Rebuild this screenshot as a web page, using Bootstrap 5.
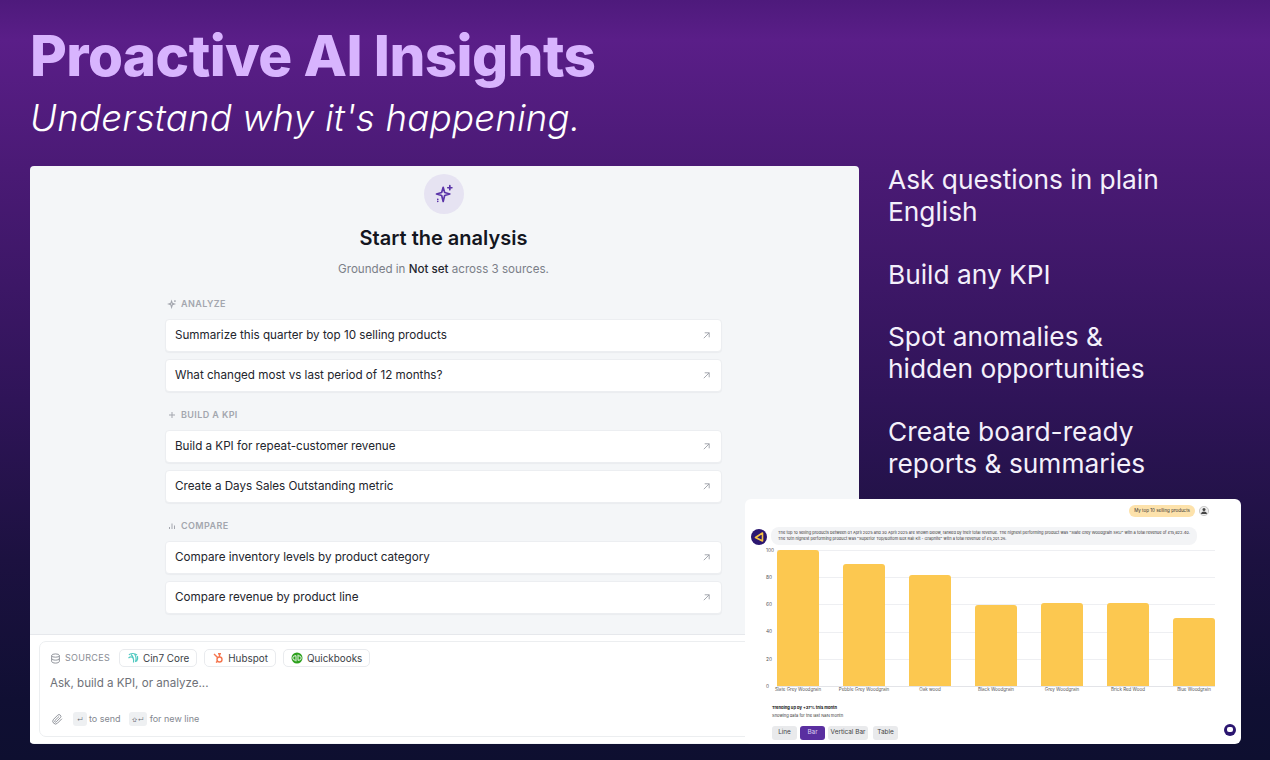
<!DOCTYPE html>
<html lang="en">
<head>
  <meta charset="UTF-8">
  <meta name="viewport" content="width=device-width, initial-scale=1.0">
  <title>Proactive AI Insights</title>
  <link href="https://cdn.jsdelivr.net/npm/bootstrap@5.3.0/dist/css/bootstrap.min.css" rel="stylesheet">
  <style>
    html, body { height: 100%; }
    body {
      font-family: Inter, "Liberation Sans", sans-serif;
      overflow: hidden;
      background: linear-gradient(180deg, #4e1a7c 0, #5a1e88 40px, #4a1a75 170px, #2f1458 400px, #1c1140 560px, #100f33 700px, #0e0f30 760px);
      padding: 18px 30px 0;
    }
    .hero-title { font-size: 56.6px; line-height: 76px; font-weight: 800; color: #d8b4fe; letter-spacing: -0.6px; margin: 0; }
    .hero-sub { font-size: 36.6px; line-height: 46px; font-style: italic; color: #fff; margin: 1px 0 25px; letter-spacing: .25px; font-weight: 300; }
    .stage { position: relative; height: 578px; }
    .main-panel { width: 829px; height: 578px; background: #f4f6f8; border-radius: 4px; overflow: hidden; }
    .side-list { padding: 0 0 0 29px; width: 320px; color: #f4f0fb; font-size: 26.3px; line-height: 32px; margin-top: -2px; }
    .side-list p { margin: 0 0 30.500px; }
    .spark-circle { width: 40px; height: 40px; border-radius: 50%; background: #e6e3f2; margin: 8px auto 0; position: relative; left: -1px; }
    .start-title { font-size: 20px; line-height: 28px; font-weight: 600; color: #14161f; margin: 10px 2px 0 0; text-align: center; }
    .start-sub { font-size: 11.6px; line-height: 16px; color: #7b7f88; text-align: center; margin: 9px 2px 0 0; }
    .start-sub b { font-weight: 500; color: #24262e; }
    .prompts { width: 557px; margin: 21px 0 0 135px; }
    .group-label { font-size: 9px; line-height: 12px; font-weight: 600; letter-spacing: .4px; color: #a3a6ae; padding-left: 2px; margin-bottom: 9px; }
    .group-label.later { margin-top: 17px; }
    .prompt-row { height: 33px; background: #fff; border: 1px solid #eceef1; border-radius: 4px; padding: 0 9px; margin-bottom: 7px; font-size: 11.65px; color: #23252d; box-shadow: 0 1px 1px rgba(20,20,40,.04); }
    .prompt-row svg { flex: none; margin-right: 1px; }
    .composer-wrap { height: 109px; margin-top: 20px; background: #fff; border-top: 1px solid #e6e8ec; padding: 6px 9px 0; }
    .composer { height: 96px; border: 1px solid #eceef0; border-radius: 7px; padding: 7px 10px; }
    .source-row { gap: 7px; }
    .sources-label { font-size: 9px; letter-spacing: .3px; color: #8a8d95; margin-right: 2px; }
    .src-chip { height: 18px; padding: 0 7px; border: 1px solid #e9ebee; border-radius: 5px; font-size: 9.9px; color: #3c3f47; background: #fff; }
    .ask-line { font-size: 11.6px; line-height: 16px; color: #6e7178; margin: 8px 0 0; }
    .hint-row { margin-top: 21px; font-size: 9px; color: #84878f; gap: 2px; }
    .clip-icon { margin: 0 8px 0 2px; }
    .key-cap { display: inline-flex; align-items: center; justify-content: center; height: 14px; min-width: 14px; padding: 0 2px; border-radius: 3px; background: #eef0f2; color: #6c6f76; font-size: 6px; }
    .key-wide { min-width: 18px; margin-left: 6px; margin-right: 1px; }
    .chart-card { position: absolute; left: 715px; top: 333px; width: 496px; height: 245px; background: #fff; border-radius: 6px; padding: 6px 6px 0; }
    .user-bubble { height: 12px; padding: 0 5px; background: #fde2ab; border-radius: 6px; font-size: 4.5px; color: #333; }
    .ai-bubble { margin-left: 4px; width: 426px; height: 18px; padding: 3px 7px 0; background: #f3f4f6; border-radius: 8px; font-size: 4px; line-height: 6px; color: #333; white-space: nowrap; }
    .ai-logo { width: 16px; height: 16px; border-radius: 50%; background: #2b1670; flex: none; margin-top: 2px; }
    .chart-area { position: relative; height: 137px; margin: 5px 20px 0 26px; border-bottom: 1px solid #e3e4e8;
      background: repeating-linear-gradient(180deg, #eeeff2 0, #eeeff2 1px, transparent 1px, transparent 27.2px); }
    .y-ticks { position: absolute; left: -11px; top: -3px; height: 143px; font-size: 4.8px; color: #555; }
    .bars { position: absolute; inset: 0; }
    .bar-slot { width: 42px; height: 100%; }
    .chart-bar { background: #fcc850; border-radius: 3px 3px 0 0; }
    .x-labels { margin: 0 20px 0 26px; font-size: 4.5px; color: #555; }
    .x-labels span { width: 42px; white-space: nowrap; display: flex; justify-content: center; }
    .trend-title { font-size: 4.1px; line-height: 6px; font-weight: 700; color: #111; margin: 11px 0 0 21px; }
    .trend-sub { font-size: 4.1px; line-height: 6px; color: #333; margin: 2px 0 0 21px; }
    .chart-tabs { margin: 7px 0 0 21px; gap: 3px; }
    .chart-tab { height: 14px; border-radius: 3px; background: #e9eaec; color: #444; font-size: 6.4px; }
    .chart-tab.on { background: #5a2fa0; color: #ddd2f3; }
    .tab-sm { width: 25px; }
    .tab-lg { width: 40px; }
    .tab-last { margin-left: 2px; }
    .chat-dot { position: absolute; right: 5px; bottom: 8px; width: 12px; height: 12px; border-radius: 50%; background: #2b1670; }
    .chat-dot::after { content: ""; position: absolute; left: 3px; top: 3px; width: 6px; height: 5px; background: #fff; border-radius: 2px; }
  </style>
</head>
<body>
  <h1 class="hero-title">Proactive AI Insights</h1>
  <p class="hero-sub">Understand why it's happening.</p>

  <div class="stage d-flex">
    <div class="main-panel">
      <div class="spark-circle d-flex align-items-center justify-content-center">
        <svg width="20" height="20" viewBox="0 0 24 24" fill="none" stroke="#5b34a8" stroke-width="2" stroke-linecap="round" stroke-linejoin="round">
          <path d="M11 4l1.800 6.200L19 12l-6.200 1.800L11 21l-1.800-7.200L3 12l6.200-1.800z"/>
          <path d="M19 2v5M16.500 4.500h5M4.500 18.500h.01M4.500 21h.01"/>
        </svg>
      </div>
      <h2 class="start-title">Start the analysis</h2>
      <p class="start-sub">Grounded in <b>Not set</b> across 3 sources.</p>

      <div class="prompts">
        <div class="group-label d-flex align-items-center gap-1">
          <svg width="10" height="10" viewBox="0 0 24 24" fill="none" stroke="#a3a6ae" stroke-width="2.500"><path d="M11 5l1.800 5.200L18 12l-5.200 1.800L11 20l-1.800-6.200L4 12l5.200-1.800zM19 3v4M17 5h4"/></svg>
          ANALYZE
        </div>
        <div class="prompt-row d-flex align-items-center justify-content-between">Summarize this quarter by top 10 selling products
          <svg width="9" height="9" viewBox="0 0 10 10" fill="none" stroke="#9b9ea6" stroke-width="1"><path d="M2 8L8 2M3 2h5v5"/></svg></div>
        <div class="prompt-row d-flex align-items-center justify-content-between">What changed most vs last period of 12 months?
          <svg width="9" height="9" viewBox="0 0 10 10" fill="none" stroke="#9b9ea6" stroke-width="1"><path d="M2 8L8 2M3 2h5v5"/></svg></div>

        <div class="group-label later d-flex align-items-center gap-1">
          <svg width="10" height="10" viewBox="0 0 10 10" fill="none" stroke="#a3a6ae" stroke-width="1"><path d="M5 2v6M2 5h6"/></svg>
          BUILD A KPI
        </div>
        <div class="prompt-row d-flex align-items-center justify-content-between">Build a KPI for repeat-customer revenue
          <svg width="9" height="9" viewBox="0 0 10 10" fill="none" stroke="#9b9ea6" stroke-width="1"><path d="M2 8L8 2M3 2h5v5"/></svg></div>
        <div class="prompt-row d-flex align-items-center justify-content-between">Create a Days Sales Outstanding metric
          <svg width="9" height="9" viewBox="0 0 10 10" fill="none" stroke="#9b9ea6" stroke-width="1"><path d="M2 8L8 2M3 2h5v5"/></svg></div>

        <div class="group-label later d-flex align-items-center gap-1">
          <svg width="10" height="10" viewBox="0 0 10 10" fill="none" stroke="#a3a6ae" stroke-width="1"><path d="M2.500 8V6M5 8V2.500M7.500 8V4.500"/></svg>
          COMPARE
        </div>
        <div class="prompt-row d-flex align-items-center justify-content-between">Compare inventory levels by product category
          <svg width="9" height="9" viewBox="0 0 10 10" fill="none" stroke="#9b9ea6" stroke-width="1"><path d="M2 8L8 2M3 2h5v5"/></svg></div>
        <div class="prompt-row d-flex align-items-center justify-content-between">Compare revenue by product line
          <svg width="9" height="9" viewBox="0 0 10 10" fill="none" stroke="#9b9ea6" stroke-width="1"><path d="M2 8L8 2M3 2h5v5"/></svg></div>
      </div>

      <div class="composer-wrap">
        <div class="composer">
          <div class="source-row d-flex align-items-center">
            <span class="sources-label d-flex align-items-center gap-1">
              <svg width="11" height="11" viewBox="0 0 12 12" fill="none" stroke="#8a8d95" stroke-width="1"><ellipse cx="6" cy="2.800" rx="4.200" ry="1.800"/><path d="M1.800 2.800v6.400c0 1 1.900 1.800 4.200 1.800s4.200-.8 4.200-1.800V2.800M1.800 6c0 1 1.900 1.800 4.200 1.800s4.200-.8 4.200-1.800"/></svg>
              SOURCES
            </span>
            <span class="src-chip d-flex align-items-center gap-1">
              <svg width="12" height="12" viewBox="0 0 12 12" fill="none" stroke="#4fc9c0" stroke-width="1.200"><path d="M2 3c1-2 6-2 8 0M1.500 6c2-1.500 4-1.500 5 1M4 2.500c2 2 3 5 2.500 8M7.500 2c1.500 2 2 5 1 8M10.500 4c.5 2 0 4-1 5.500"/></svg>
              Cin7 Core
            </span>
            <span class="src-chip d-flex align-items-center gap-1">
              <svg width="12" height="12" viewBox="0 0 12 12" fill="none" stroke="#f5764f" stroke-width="1.400"><circle cx="7.500" cy="7.500" r="2.500"/><path d="M7.500 5V2M2 2l3.800 3.800M4 10.500l1.700-1.400M6 1.800h3"/></svg>
              Hubspot
            </span>
            <span class="src-chip d-flex align-items-center gap-1">
              <svg width="12" height="12" viewBox="0 0 12 12"><circle cx="6" cy="6" r="5.500" fill="#2ca01c"/><path d="M5 3.800H4a2.200 2.200 0 0 0 0 4.400h.6M5 3.600v5.800M7 8.200h1a2.200 2.200 0 0 0 0-4.400h-.6M7 8.400V2.600" fill="none" stroke="#fff" stroke-width=".9"/></svg>
              Quickbooks
            </span>
          </div>
          <p class="ask-line">Ask, build a KPI, or analyze...</p>
          <div class="hint-row d-flex align-items-center">
            <svg class="clip-icon" width="11" height="11" viewBox="0 0 24 24" fill="none" stroke="#8a8d95" stroke-width="2" stroke-linecap="round"><path d="M21 11l-9 9a6 6 0 0 1-8.500-8.500l9-9a4 4 0 0 1 5.700 5.700l-9 9a2 2 0 0 1-2.900-2.900l8.500-8.300"/></svg>
            <span class="key-cap">↵</span> to send
            <span class="key-cap key-wide">⇧↵</span> for new line
          </div>
        </div>
      </div>
    </div>

    <div class="side-list">
      <p>Ask questions in plain English</p>
      <p>Build any KPI</p>
      <p>Spot anomalies &amp; hidden opportunities</p>
      <p>Create board-ready reports &amp; summaries</p>
    </div>

    <div class="chart-card">
      <div class="d-flex justify-content-end align-items-center gap-1" style="margin-right:26px">
        <span class="user-bubble d-flex align-items-center">My top 10 selling products</span>
        <svg width="10" height="10" viewBox="0 0 10 10"><circle cx="5" cy="5" r="4.600" fill="#eee" stroke="#888" stroke-width=".4"/><circle cx="5" cy="3.600" r="1.500" fill="#444"/><path d="M2 8c.4-2 1.500-2.600 3-2.600S7.600 6 8 8z" fill="#444"/></svg>
      </div>
      <div class="d-flex align-items-start" style="margin-top:10px">
        <div class="ai-logo d-flex align-items-center justify-content-center">
          <svg width="12" height="12" viewBox="0 0 12 12" fill="none" stroke="#f6c244" stroke-width="1.600" stroke-linejoin="round"><path d="M9.500 2L2.500 6.500 9.500 10z"/></svg>
        </div>
        <div class="ai-bubble">The top 10 selling products between 01 April 2025 and 30 April 2025 are shown below, ranked by their total revenue. The highest performing product was "Slate Grey Woodgrain SKU" with a total revenue of £15,822.40.<br>The 10th highest performing product was "Superior Top/Bottom Box Rail Kit - Graphite" with a total revenue of £5,201.26.</div>
      </div>
      <div class="chart-area">
        <div class="y-ticks d-flex flex-column justify-content-between"><span>100</span><span>80</span><span>60</span><span>40</span><span>20</span><span>0</span></div>
        <div class="bars d-flex justify-content-between align-items-end">
          <div class="bar-slot d-flex align-items-end"><div class="chart-bar w-100" style="height:100%"></div></div>
          <div class="bar-slot d-flex align-items-end"><div class="chart-bar w-100" style="height:89.7%"></div></div>
          <div class="bar-slot d-flex align-items-end"><div class="chart-bar w-100" style="height:81.6%"></div></div>
          <div class="bar-slot d-flex align-items-end"><div class="chart-bar w-100" style="height:59.6%"></div></div>
          <div class="bar-slot d-flex align-items-end"><div class="chart-bar w-100" style="height:60.7%"></div></div>
          <div class="bar-slot d-flex align-items-end"><div class="chart-bar w-100" style="height:60.7%"></div></div>
          <div class="bar-slot d-flex align-items-end"><div class="chart-bar w-100" style="height:50%"></div></div>
        </div>
      </div>
      <div class="x-labels d-flex justify-content-between">
        <span>Slate Grey Woodgrain</span><span>Pebble Grey Woodgrain</span><span>Oak wood</span><span>Black Woodgrain</span><span>Grey Woodgrain</span><span>Brick Red Wood</span><span>Blue Woodgrain</span>
      </div>
      <p class="trend-title">Trending up by +37% this month</p>
      <p class="trend-sub">Showing data for the last NaN month</p>
      <div class="chart-tabs d-flex">
        <span class="chart-tab tab-sm d-flex align-items-center justify-content-center">Line</span>
        <span class="chart-tab tab-sm on d-flex align-items-center justify-content-center">Bar</span>
        <span class="chart-tab tab-lg d-flex align-items-center justify-content-center">Vertical Bar</span>
        <span class="chart-tab tab-sm tab-last d-flex align-items-center justify-content-center">Table</span>
      </div>
      <span class="chat-dot"></span>
    </div>
  </div>
  <script src="https://cdn.jsdelivr.net/npm/bootstrap@5.3.0/dist/js/bootstrap.bundle.min.js"></script>
</body>
</html>
